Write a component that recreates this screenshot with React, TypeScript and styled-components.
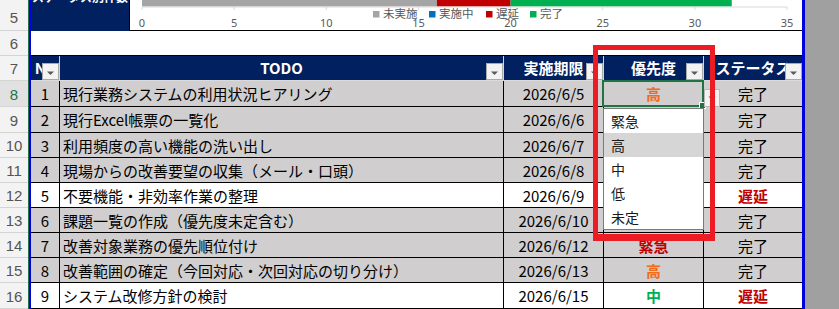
import React from "react";
import styled, { createGlobalStyle } from "styled-components";

const GlobalStyle = createGlobalStyle`
  html, body {
    margin: 0;
    padding: 0;
    background: #ffffff;
  }
  body {
    font-family: "Noto Sans CJK JP", "Noto Sans", sans-serif;
  }
`;

interface Task {
  no: number;
  todo: string;
  due: string;
  priority: string;
  status: string;
  height: number;
}

const tasks: Task[] = [
  { no: 1, todo: "現行業務システムの利用状況ヒアリング", due: "2026/6/5", priority: "高", status: "完了", height: 26 },
  { no: 2, todo: "現行Excel帳票の一覧化", due: "2026/6/6", priority: "高", status: "完了", height: 26 },
  { no: 3, todo: "利用頻度の高い機能の洗い出し", due: "2026/6/7", priority: "中", status: "完了", height: 25 },
  { no: 4, todo: "現場からの改善要望の収集（メール・口頭）", due: "2026/6/8", priority: "中", status: "完了", height: 25 },
  { no: 5, todo: "不要機能・非効率作業の整理", due: "2026/6/9", priority: "低", status: "遅延", height: 25 },
  { no: 6, todo: "課題一覧の作成（優先度未定含む）", due: "2026/6/10", priority: "未定", status: "完了", height: 25 },
  { no: 7, todo: "改善対象業務の優先順位付け", due: "2026/6/12", priority: "緊急", status: "完了", height: 25 },
  { no: 8, todo: "改善範囲の確定（今回対応・次回対応の切り分け）", due: "2026/6/13", priority: "高", status: "完了", height: 25 },
  { no: 9, todo: "システム改修方針の検討", due: "2026/6/15", priority: "中", status: "遅延", height: 26 },
];

const rowHeads = [
  { n: 5, h: 31 },
  { n: 6, h: 25 },
  { n: 7, h: 25 },
  { n: 8, h: 26, sel: true },
  { n: 9, h: 26 },
  { n: 10, h: 25 },
  { n: 11, h: 25 },
  { n: 12, h: 25 },
  { n: 13, h: 25 },
  { n: 14, h: 25 },
  { n: 15, h: 25 },
  { n: 16, h: 26 },
];

const priorityColor: Record<string, string> = {
  緊急: "#c00000",
  高: "#f26a1b",
  中: "#00b050",
  低: "#000000",
  未定: "#000000",
};

const options = ["緊急", "高", "中", "低", "未定"];

const COLS = "29px 444px 100px 100px 98px";

const FilterArrow = () => (
  <FilterButton>
    <svg width="9" height="6" viewBox="0 0 9 6">
      <path d="M1 1.5 L8 1.5 L4.5 5 Z" fill="#5a5a5a" />
    </svg>
  </FilterButton>
);

const StatusChart = () => {
  const x0 = 12;
  const unit = 18.43;
  const ticks = [0, 5, 10, 15, 20, 25, 30, 35];
  const legend = [
    { label: "未実施", color: "#a5a5a5", x: 243 },
    { label: "実施中", color: "#0070c0", x: 299 },
    { label: "遅延", color: "#c00000", x: 356 },
    { label: "完了", color: "#00b050", x: 400 },
  ];
  return (
    <svg width="672" height="30" viewBox="0 0 672 30">
      <rect x={x0} y={-4} width={16 * unit} height={10.5} fill="#a5a5a5" />
      <rect x={x0 + 16 * unit} y={-4} width={4 * unit} height={10.5} fill="#c00000" />
      <rect x={x0 + 20 * unit} y={-4} width={12 * unit} height={10.5} fill="#00b050" />
      <line x1={x0} y1={7} x2={x0 + 35 * unit} y2={7} stroke="#d9d9d9" strokeWidth={1} />
      {ticks.map((t) => (
        <g key={t}>
          <line x1={x0 + t * unit} y1={7} x2={x0 + t * unit} y2={10} stroke="#d9d9d9" strokeWidth={1} />
          <text
            x={x0 + t * unit}
            y={27}
            textAnchor="middle"
            fontSize="11"
            fill="#595959"
            fontFamily="'Noto Sans', sans-serif"
          >
            {t}
          </text>
        </g>
      ))}
      {legend.map((l) => (
        <g key={l.label}>
          <rect x={l.x} y={11} width={6.5} height={6.5} fill={l.color} />
          <text x={l.x + 10} y={18} fontSize="11.5" fill="#595959" fontFamily="'Noto Sans CJK JP', sans-serif">
            {l.label}
          </text>
        </g>
      ))}
    </svg>
  );
};

export default function App() {
  return (
    <Screen>
      <GlobalStyle />
      <RowHeaders>
        {rowHeads.map((r) => (
          <RowHead key={r.n} $h={r.h} $sel={!!r.sel}>
            {r.n}
          </RowHead>
        ))}
      </RowHeaders>

      <Sheet>
        <ChartBand>
          <TitleCell>
            <TitleText>ステータス別件数</TitleText>
          </TitleCell>
          <ChartArea>
            <StatusChart />
          </ChartArea>
        </ChartBand>

        <BlankRow />

        <HeaderRow>
          {["No", "TODO", "実施期限", "優先度", "ステータス"].map((h, i) => (
            <HeadCell key={h} $last={i === 4}>
              <HeadText>{h}</HeadText>
              <FilterArrow />
            </HeadCell>
          ))}
        </HeaderRow>

        {tasks.map((t) => {
          const late = t.status === "遅延";
          return (
            <DataRow key={t.no} $h={t.height} $shade={!late}>
              <Cell $align="center">{t.no}</Cell>
              <Cell $align="flex-start">{t.todo}</Cell>
              <Cell $align="center">{t.due}</Cell>
              <Cell $align="center" $color={priorityColor[t.priority]} $bold>
                {t.priority}
              </Cell>
              <Cell $align="center" $last $color={late ? "#c00000" : "#000"} $bold={late}>
                {t.status}
              </Cell>
            </DataRow>
          );
        })}

        <Selection>
          <FillHandle />
        </Selection>
        <ListButton>
          <svg width="8" height="5" viewBox="0 0 8 5">
            <path d="M0.5 0.5 L7.5 0.5 L4 4.5 Z" fill="#5a5a5a" />
          </svg>
        </ListButton>
        <DropList>
          {options.map((o) => (
            <DropItem key={o} $active={o === "高"}>
              {o}
            </DropItem>
          ))}
        </DropList>
        <Highlight />
      </Sheet>

      <OffPage />
    </Screen>
  );
}

const Screen = styled.div`
  display: flex;
  width: 839px;
  height: 309px;
  overflow: hidden;
  background: #ffffff;
`;

const RowHeaders = styled.div`
  display: flex;
  flex-direction: column;
  width: 28px;
  flex-shrink: 0;
  border-right: 1px solid #217346;
  background: #f3f3f3;
`;

const RowHead = styled.div<{ $h: number; $sel: boolean }>`
  box-sizing: border-box;
  height: ${(p) => p.$h}px;
  flex-shrink: 0;
  display: flex;
  align-items: center;
  justify-content: center;
  padding-top: ${(p) => (p.$h > 30 ? 4 : 1)}px;
  border-bottom: 1px solid #d4d4d4;
  background: ${(p) => (p.$sel ? "#e1e1e1" : "#f3f3f3")};
  color: ${(p) => (p.$sel ? "#217346" : "#555555")};
  font-family: "Liberation Sans", Arial, sans-serif;
  font-size: 15px;
`;

const Sheet = styled.div`
  position: relative;
  width: 771px;
  flex-shrink: 0;
  display: flex;
  flex-direction: column;
  border-left: 2px solid #0000e0;
  border-right: 3px solid #0000e0;
`;

const ChartBand = styled.div`
  display: flex;
  height: 31px;
  flex-shrink: 0;
`;

const TitleCell = styled.div`
  width: 98px;
  background: #002060;
  overflow: hidden;
  display: flex;
  justify-content: center;
  align-items: flex-start;
`;

const TitleText = styled.div`
  margin-top: -10px;
  color: #ffffff;
  font-weight: 700;
  font-size: 12px;
  line-height: 14px;
  white-space: nowrap;
`;

const ChartArea = styled.div`
  flex: 1;
  box-sizing: border-box;
  border-left: 1px solid #000;
  border-bottom: 1px solid #000;
  overflow: hidden;
  background: #ffffff;
`;

const BlankRow = styled.div`
  box-sizing: border-box;
  height: 25px;
  flex-shrink: 0;
  border-bottom: 1px solid #000;
`;

const HeaderRow = styled.div`
  display: grid;
  grid-template-columns: ${COLS};
  height: 25px;
  flex-shrink: 0;
  background: #002060;
`;

const HeadCell = styled.div<{ $last?: boolean }>`
  position: relative;
  box-sizing: border-box;
  display: flex;
  align-items: center;
  justify-content: center;
  border-right: ${(p) => (p.$last ? "none" : "1px solid #d0d4de")};
  border-bottom: 1px solid #dadada;
`;

const HeadText = styled.span`
  color: #ffffff;
  font-weight: 700;
  font-size: 15px;
  white-space: nowrap;
  margin-top: -2px;
`;

const FilterButton = styled.div`
  position: absolute;
  right: 0;
  bottom: 0;
  width: 17px;
  height: 17px;
  box-sizing: border-box;
  background: #f3f3f3;
  border: 1px solid #a9a9a9;
  display: flex;
  align-items: center;
  justify-content: center;
  padding-top: 2px;
`;

const DataRow = styled.div<{ $h: number; $shade: boolean }>`
  display: grid;
  grid-template-columns: ${COLS};
  height: ${(p) => p.$h}px;
  flex-shrink: 0;
  background: ${(p) => (p.$shade ? "#d0cece" : "#ffffff")};
`;

const Cell = styled.div<{ $align: string; $last?: boolean; $color?: string; $bold?: boolean }>`
  box-sizing: border-box;
  display: flex;
  align-items: center;
  justify-content: ${(p) => p.$align};
  padding-left: ${(p) => (p.$align === "flex-start" ? 3 : 0)}px;
  border-right: ${(p) => (p.$last ? "none" : "1px solid #000")};
  border-bottom: 1px solid #000;
  color: ${(p) => p.$color || "#000"};
  font-weight: ${(p) => (p.$bold ? 700 : 400)};
  font-size: 15px;
  white-space: nowrap;
  overflow: hidden;
`;

const Selection = styled.div`
  position: absolute;
  left: 571px;
  top: 80px;
  width: 102px;
  height: 27px;
  box-sizing: border-box;
  border: 2px solid #217346;
`;

const FillHandle = styled.div`
  position: absolute;
  right: -4px;
  bottom: -4px;
  width: 5px;
  height: 5px;
  background: #217346;
  border: 1px solid #ffffff;
`;

const ListButton = styled.div`
  position: absolute;
  left: 673px;
  top: 89px;
  width: 16px;
  height: 18px;
  box-sizing: border-box;
  background: #f3f3f3;
  border: 1px solid #b8b8b8;
  display: flex;
  align-items: center;
  justify-content: center;
`;

const DropList = styled.div`
  position: absolute;
  left: 572px;
  top: 108px;
  width: 101px;
  box-sizing: border-box;
  background: #ffffff;
  border: 1px solid #7a7a7a;
  display: flex;
  flex-direction: column;
`;

const DropItem = styled.div<{ $active: boolean }>`
  height: 24px;
  display: flex;
  align-items: center;
  padding-left: 7px;
  font-size: 14px;
  color: #1a1a1a;
  background: ${(p) => (p.$active ? "#d6d6d6" : "#ffffff")};
`;

const Highlight = styled.div`
  position: absolute;
  left: 562px;
  top: 45px;
  width: 122px;
  height: 196px;
  box-sizing: border-box;
  border: 5px solid #ed1c24;
  border-bottom-width: 7px;
  pointer-events: none;
`;

const OffPage = styled.div`
  flex: 1;
  background: #a0a0a0;
`;
